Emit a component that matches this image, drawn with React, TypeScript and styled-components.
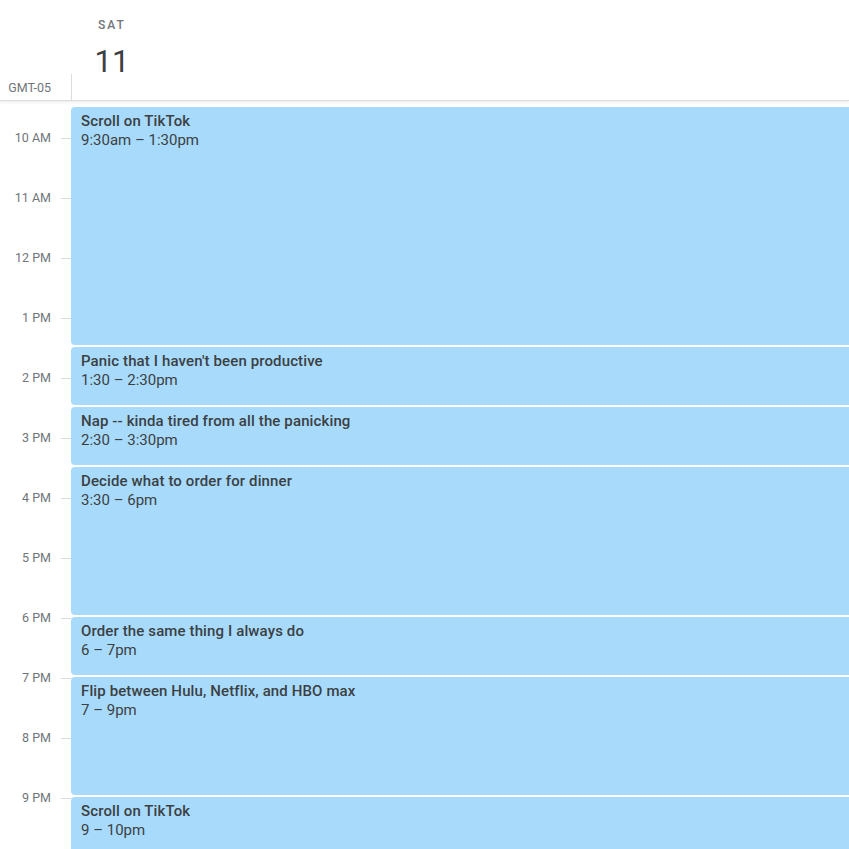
import React from 'react';
import styled, { createGlobalStyle } from 'styled-components';

const HOUR = 60;

const GlobalStyle = createGlobalStyle`
  html, body { margin: 0; padding: 0; background: #fff; }
  body { font-family: Roboto, "Liberation Sans", Arial, sans-serif; overflow: hidden; }
`;

const Page = styled.div`width: 100%; height: 100vh; overflow: hidden; display: flex; flex-direction: column; background: #fff;`;
const Header = styled.div`display: flex; height: 100px; flex-shrink: 0; border-bottom: 1px solid #dadce0; box-shadow: 0 1px 3px rgba(60, 64, 67, 0.12); position: relative; z-index: 1; background: #fff;`;
const HeaderGutter = styled.div`width: 72px; flex-shrink: 0; display: flex; flex-direction: column; justify-content: flex-end;`;
const TzLabel = styled.div`height: 26px; box-sizing: border-box; border-right: 1px solid #dadce0; display: flex; align-items: center; justify-content: flex-end; padding-right: 20px; font-size: 12.5px; color: #70757a;`;
const DayHead = styled.div`width: 78px; display: flex; flex-direction: column; align-items: center; padding: 17px 0 0 1px;`;
const DayName = styled.div`font-size: 12px; font-weight: 500; letter-spacing: 2px; line-height: 16px; color: #70757a;`;
const DayNum = styled.div`font-size: 31px; line-height: 40px; margin-top: 9px; color: #3c4043;`;

const Body = styled.div`display: flex; flex: 1; overflow: hidden;`;
const Gutter = styled.div`width: 71px; flex-shrink: 0; padding-top: 30px; display: flex; flex-direction: column;`;
const HourSlot = styled.div`height: ${HOUR}px; flex-shrink: 0; display: flex; align-items: flex-start;`;
const HourLabel = styled.div`width: 51px; text-align: right; font-size: 12.5px; line-height: 14px; color: #70757a;`;
const Tick = styled.div`width: 10px; height: 1px; margin: 7px 0 0 10px; background: #dadce0;`;

const DayColumn = styled.div`flex: 1; padding-top: 6px; margin-right: -8px; display: flex; flex-direction: column; gap: 2px;`;
const EventCard = styled.div<{ $hours: number }>`
  height: ${p => p.$hours * HOUR - 2}px;
  flex-shrink: 0;
  box-sizing: border-box;
  padding: 5px 10px;
  border-radius: 4px;
  background: #a8dbfb;
  color: #3c4043;
  font-size: 15px;
  line-height: 19px;
`;
const EventTitle = styled.div`font-weight: 500; letter-spacing: 0.12px;`;
const EventTime = styled.div``;

const hours = ['10 AM', '11 AM', '12 PM', '1 PM', '2 PM', '3 PM', '4 PM', '5 PM', '6 PM', '7 PM', '8 PM', '9 PM'];

const events = [
  { title: 'Scroll on TikTok', time: '9:30am – 1:30pm', hours: 4 },
  { title: "Panic that I haven't been productive", time: '1:30 – 2:30pm', hours: 1 },
  { title: 'Nap -- kinda tired from all the panicking', time: '2:30 – 3:30pm', hours: 1 },
  { title: 'Decide what to order for dinner', time: '3:30 – 6pm', hours: 2.5 },
  { title: 'Order the same thing I always do', time: '6 – 7pm', hours: 1 },
  { title: 'Flip between Hulu, Netflix, and HBO max', time: '7 – 9pm', hours: 2 },
  { title: 'Scroll on TikTok', time: '9 – 10pm', hours: 1 },
];

export default function App() {
  return (
    <Page>
      <GlobalStyle />
      <Header>
        <HeaderGutter>
          <TzLabel>GMT-05</TzLabel>
        </HeaderGutter>
        <DayHead>
          <DayName>SAT</DayName>
          <DayNum>11</DayNum>
        </DayHead>
      </Header>
      <Body>
        <Gutter>
          {hours.map(h => (
            <HourSlot key={h}>
              <HourLabel>{h}</HourLabel>
              <Tick />
            </HourSlot>
          ))}
        </Gutter>
        <DayColumn>
          {events.map((e, i) => (
            <EventCard key={i} $hours={e.hours}>
              <EventTitle>{e.title}</EventTitle>
              <EventTime>{e.time}</EventTime>
            </EventCard>
          ))}
        </DayColumn>
      </Body>
    </Page>
  );
}
